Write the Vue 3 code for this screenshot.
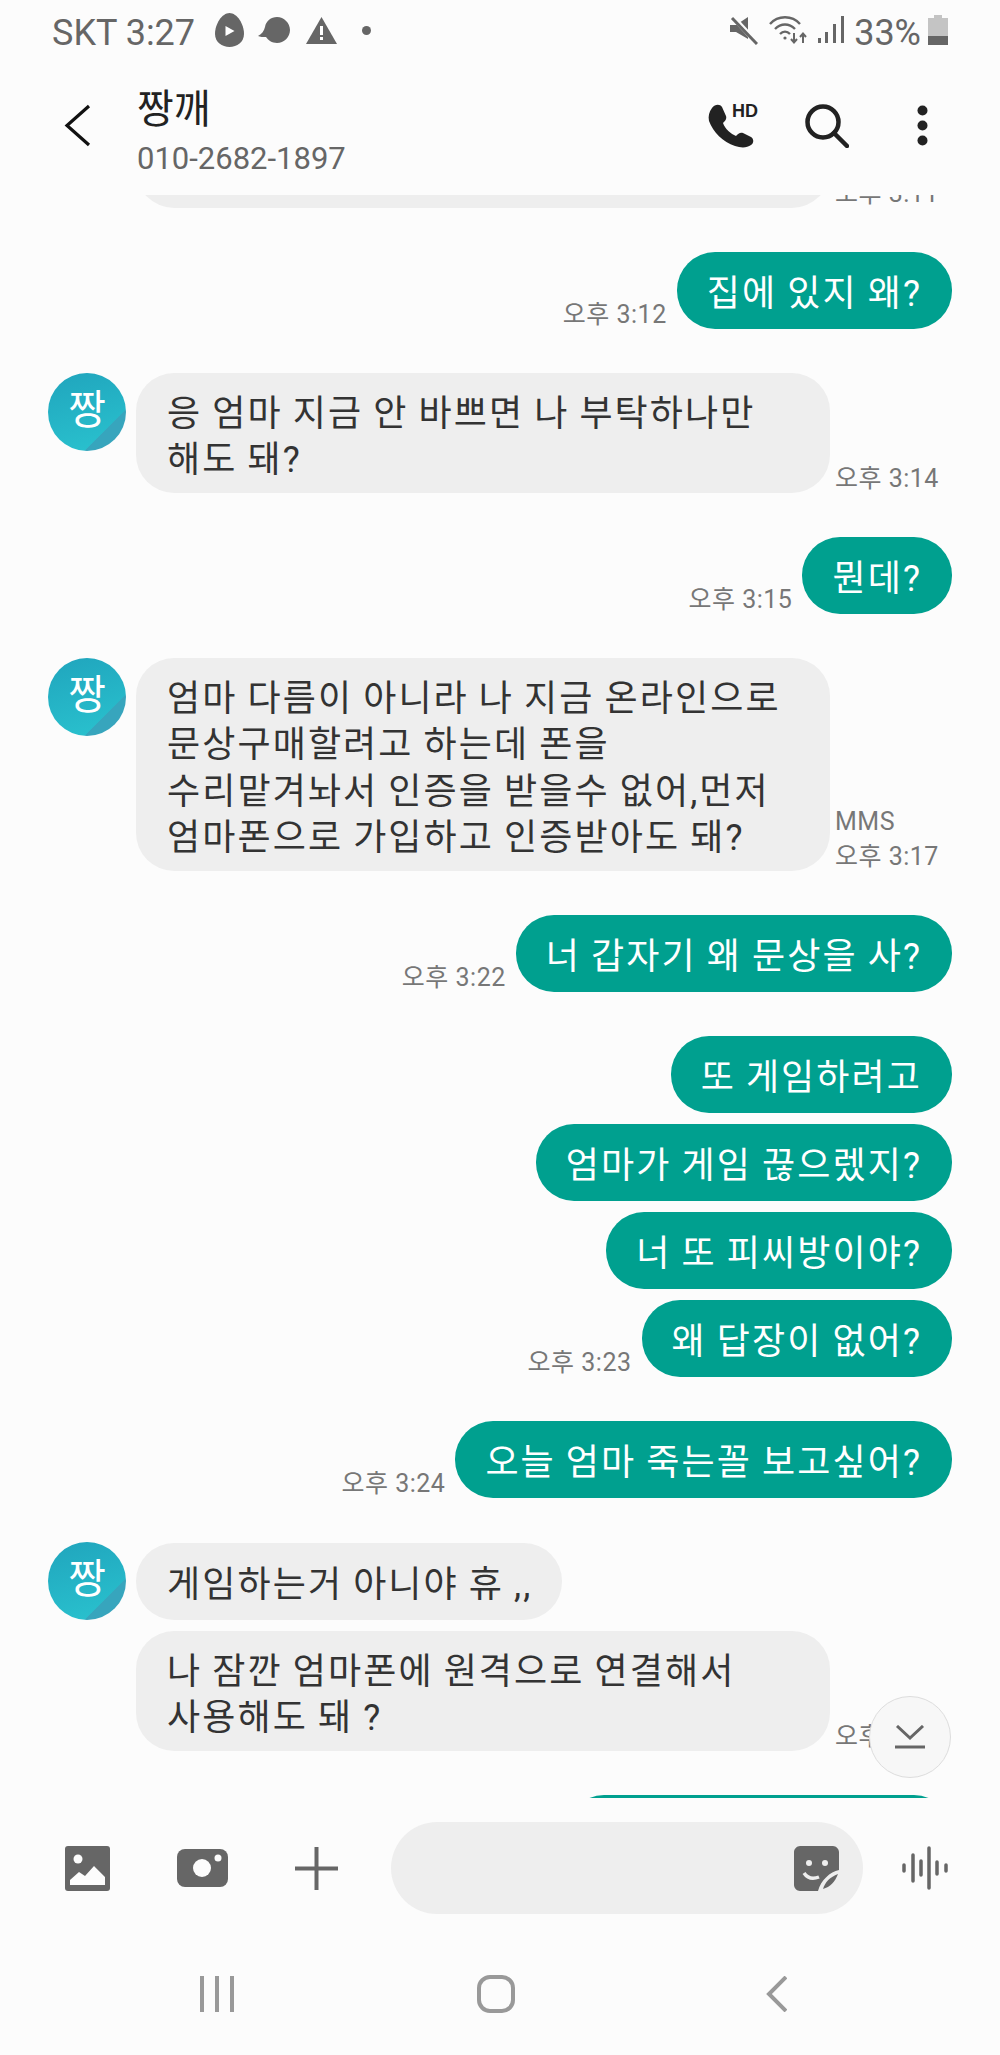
<script setup>
const messages = [
  { id: 1, side: 'in', cut: true, time: '오후 3:11' },
  { id: 2, side: 'out', text: '집에 있지 왜?', time: '오후 3:12' },
  { id: 3, side: 'in', avatar: true, wide: true, text: '응 엄마 지금 안 바쁘면 나 부탁하나만\n해도 돼?', time: '오후 3:14' },
  { id: 4, side: 'out', text: '뭔데?', time: '오후 3:15' },
  { id: 5, side: 'in', avatar: true, wide: true, text: '엄마 다름이 아니라 나 지금 온라인으로\n문상구매할려고 하는데 폰을\n수리맡겨놔서 인증을 받을수 없어,먼저\n엄마폰으로 가입하고 인증받아도 돼?', mms: true, time: '오후 3:17' },
  { id: 6, side: 'out', text: '너 갑자기 왜 문상을 사?', time: '오후 3:22' },
  { id: 7, side: 'out', text: '또 게임하려고' },
  { id: 8, side: 'out', grouped: true, text: '엄마가 게임 끊으렜지?' },
  { id: 9, side: 'out', grouped: true, text: '너 또 피씨방이야?' },
  { id: 10, side: 'out', grouped: true, text: '왜 답장이 없어?', time: '오후 3:23' },
  { id: 11, side: 'out', text: '오늘 엄마 죽는꼴 보고싶어?', time: '오후 3:24' },
  { id: 12, side: 'in', avatar: true, text: '게임하는거 아니야 휴 ,,' },
  { id: 13, side: 'in', grouped: true, wide: true, text: '나 잠깐 엄마폰에 원격으로 연결해서\n사용해도 돼 ?', time: '오후' },
  { id: 14, side: 'out', empty: true }
]
</script>

<template>
  <div class="phone">
    <div class="status">
      <span class="status-text">SKT 3:27</span>
      <svg class="s-egg" width="29" height="34" viewBox="0 0 29 34">
        <path d="M14.5 0C22 0 29 11 29 21 29 29 22 34 14.5 34 7 34 0 29 0 21 0 11 7 0 14.5 0Z" fill="#666" />
        <path d="M10.5 13l9 5-9 5z" fill="#fff" />
      </svg>
      <svg class="s-bubble" width="32" height="26" viewBox="0 0 32 26">
        <path d="M19 0C26 0 32 6 32 13S26 26 19 26C14 26 10 23 8 20 5 20 2 20 0 19 4 17 6 14 7 10 8 4 13 0 19 0Z" fill="#666" />
      </svg>
      <svg class="s-warn" width="31" height="27" viewBox="0 0 31 27">
        <path d="M15.5 0L31 27H0Z" fill="#666" />
        <path d="M14 9h3v9h-3zM14 20h3v3h-3z" fill="#fff" />
      </svg>
      <i class="s-dot"></i>
      <div class="status-right">
        <svg class="s-mute" width="28" height="30" viewBox="0 0 28 30">
          <path d="M0 10h6L18 2v22L6 17H0Z" fill="#666" />
          <path d="M2 1l25 27" stroke="#fcfcfc" stroke-width="5" />
          <path d="M2 3l25 26" stroke="#666" stroke-width="3" />
        </svg>
        <svg class="s-wifi" width="38" height="30" viewBox="0 0 38 30" fill="none" stroke="#666" stroke-width="2.4">
          <path d="M1 9C9 0 23 0 31 9" />
          <path d="M6 14C12 8 20 8 26 14" />
          <path d="M11 19C14 16 18 16 21 19" />
          <circle cx="16" cy="23" r="1.6" fill="#666" stroke="none" />
          <path d="M25 18v9M22 24l3 3.500 3-3.500M34 28v-9M31 22l3-3.500 3 3.500" stroke-width="2" />
        </svg>
        <svg class="s-signal" width="26" height="28" viewBox="0 0 26 28" fill="#666">
          <rect x="0" y="22" width="3" height="5" />
          <rect x="7" y="16" width="3" height="11" />
          <rect x="15" y="8" width="3" height="19" />
          <rect x="23" y="0" width="3" height="27" />
        </svg>
        <span class="status-text pct">33%</span>
        <svg class="s-batt" width="20" height="30" viewBox="0 0 20 30">
          <path d="M6 0h8v3h6v27H0V3h6Z" fill="#c4c4c4" />
          <rect x="0" y="21" width="20" height="9" fill="#666" />
        </svg>
      </div>
    </div>

    <header class="head">
      <svg class="back" width="27" height="43" viewBox="0 0 27 43" fill="none">
        <path d="M25 2L3 21.500 25 41" stroke="#111" stroke-width="3.200" />
      </svg>
      <div class="who">
        <div class="name">짱깨</div>
        <div class="num">010-2682-1897</div>
      </div>
      <svg class="call" width="52" height="46" viewBox="0 0 52 46">
        <path d="M5 6C8 2 13 2 15 5L19 14C20 17 18 19 16 21 18 27 24 32 29 34 31 32 33 30 36 31L44 35C47 37 47 41 44 43 40 46 34 46 28 44 16 40 6 30 2 19 1 14 2 10 5 6Z" fill="#222" />
        <text x="25" y="15" class="hd">HD</text>
      </svg>
      <svg class="search" width="44" height="44" viewBox="0 0 44 44" fill="none" stroke="#222" stroke-width="4.500">
        <circle cx="18" cy="18" r="15.500" />
        <path d="M29 29L42 42" stroke-linecap="round" />
      </svg>
      <svg class="more" width="11" height="41" viewBox="0 0 11 41" fill="#222">
        <circle cx="5.500" cy="5.500" r="5" />
        <circle cx="5.500" cy="20.500" r="5" />
        <circle cx="5.500" cy="35.500" r="5" />
      </svg>
    </header>

    <main class="chat">
      <div
        v-for="m in messages"
        :key="m.id"
        class="row"
        :class="[m.side, { grouped: m.grouped, cut: m.cut }]"
      >
        <template v-if="m.side === 'in'">
          <div v-if="m.avatar" class="avatar">짱</div>
          <div v-else class="avatar-gap"></div>
          <div class="bubble" :class="{ blank: m.cut, wide: m.wide }">{{ m.text }}</div>
          <div v-if="m.time" class="time">
            <div v-if="m.mms">MMS</div>
            <div>{{ m.time }}</div>
          </div>
        </template>
        <template v-else>
          <div v-if="m.time" class="time">{{ m.time }}</div>
          <div class="bubble" :class="{ stub: m.empty }">{{ m.text }}</div>
        </template>
      </div>
      <button class="jump">
        <svg width="30" height="24" viewBox="0 0 30 24" fill="none" stroke="#666" stroke-width="3">
          <path d="M2 1l13 12L28 1" />
          <path d="M0 22h30" />
        </svg>
      </button>
    </main>

    <footer class="composer">
      <svg class="c-gallery" width="45" height="45" viewBox="0 0 45 45">
        <rect width="45" height="45" rx="3" fill="#666" />
        <circle cx="13" cy="13" r="4.500" fill="#fcfcfc" />
        <path d="M5 39V34L14 26 20 30 29 20 40 31V39Z" fill="#fcfcfc" />
      </svg>
      <svg class="c-camera" width="51" height="38" viewBox="0 0 51 38">
        <rect width="51" height="38" rx="8" fill="#666" />
        <circle cx="25" cy="19" r="9" fill="#fcfcfc" />
        <circle cx="41" cy="9" r="3.500" fill="#fcfcfc" />
      </svg>
      <svg class="c-plus" width="43" height="43" viewBox="0 0 43 43" stroke="#666" stroke-width="4">
        <path d="M21.500 0v43M0 21.500h43" />
      </svg>
      <div class="input">
        <svg width="45" height="45" viewBox="0 0 45 45">
          <path d="M6 0H39C42 0 45 3 45 6V24C36 26 27 34 24 45H6C3 45 0 42 0 39V6C0 3 3 0 6 0Z" fill="#666" />
          <circle cx="15" cy="17" r="3" fill="#eee" />
          <circle cx="31" cy="17" r="3" fill="#eee" />
          <path d="M10 27C14 33 20 33 25 31" fill="none" stroke="#eee" stroke-width="3.500" />
          <path d="M29 43C31 36 36 31 44 28 41 36 36 41 29 43Z" fill="#666" />
        </svg>
      </div>
      <svg class="c-voice" width="46" height="44" viewBox="0 0 46 44" stroke="#666" stroke-width="3.500" stroke-linecap="round">
        <path d="M2 19v6M11 9v26M19 15v14M27 2v40M35 16v12M44 19v6" />
      </svg>
    </footer>

    <nav class="nav">
      <svg class="n-recent" width="34" height="36" viewBox="0 0 34 36" stroke="#999" stroke-width="4">
        <path d="M2 0v36M17 0v36M32 0v36" />
      </svg>
      <svg class="n-home" width="38" height="38" viewBox="0 0 38 38" fill="none">
        <rect x="2" y="2" width="34" height="34" rx="11" stroke="#999" stroke-width="4" />
      </svg>
      <svg class="n-back" width="21" height="36" viewBox="0 0 21 36" fill="none">
        <path d="M20 1L3 18l17 17" stroke="#999" stroke-width="4" />
      </svg>
    </nav>
  </div>
</template>

<style scoped>
.phone {
  width: 1000px;
  height: 2055px;
  display: flex;
  flex-direction: column;
  background: #fcfcfc;
  font-family: Roboto, "Noto Sans CJK KR", sans-serif;
  overflow: hidden;
}

.status {
  height: 60px;
  flex: none;
  display: flex;
  align-items: center;
  padding: 0 52px;
}
.status-text {
  font-size: 36px;
  color: #666;
  white-space: nowrap;
  padding-top: 5px;
}
.s-egg { margin-left: 20px; }
.s-bubble { margin-left: 14px; }
.s-warn { margin-left: 16px; }
.s-dot {
  width: 9px;
  height: 9px;
  border-radius: 50%;
  background: #666;
  margin-left: 25px;
}
.status-right {
  margin-left: auto;
  display: flex;
  align-items: center;
}
.s-wifi { margin-left: 11px; }
.s-signal { margin-left: 11px; }
.pct { margin-left: 10px; }
.s-batt { margin-left: 7px; }

.head {
  height: 135px;
  flex: none;
  display: flex;
  align-items: center;
}
.back { margin: 0 0 5px 64px; }
.who {
  margin-left: 46px;
  flex: 1;
  padding-top: 12px;
}
.name {
  font-size: 40px;
  line-height: 50px;
  color: #222;
}
.num {
  font-size: 31px;
  line-height: 48px;
  color: #666;
}
.call { margin-bottom: 5px; }
.hd {
  font-family: "Liberation Sans", sans-serif;
  font-weight: 700;
  font-size: 18px;
  fill: #222;
}
.search { margin: 0 0 4px 46px; }
.more { margin: 0 72px 4px 68px; }

.chat {
  position: relative;
  height: 1603px;
  flex: none;
  overflow: hidden;
  padding: 0 48px;
}
.row {
  display: flex;
  align-items: flex-end;
  margin-top: 44px;
}
.row.cut { margin-top: -107px; }
.row.grouped { margin-top: 11px; }
.row.out { justify-content: flex-end; }

.avatar,
.avatar-gap {
  width: 78px;
  height: 78px;
  flex: none;
  margin-right: 10px;
  align-self: flex-start;
}
.avatar {
  border-radius: 50%;
  background:
    linear-gradient(135deg, transparent 73%, #37a5bd 73.500%),
    linear-gradient(165deg, #20a5bd, #2ac3cf);
  color: #fff;
  font-size: 41px;
  line-height: 74px;
  text-align: center;
}

.bubble {
  min-height: 77px;
  box-sizing: border-box;
  display: flex;
  align-items: center;
  padding: 17.500px 30px 9.500px;
  border-radius: 38px;
  font-size: 36px;
  letter-spacing: 2.100px;
  word-spacing: -1px;
  line-height: 46.500px;
  white-space: pre-line;
}
.in .bubble {
  background: #eee;
  color: #333;
  padding-left: 31px;
}
.out .bubble {
  background: #00a08f;
  color: #fff;
}
.in .bubble.wide { width: 694px; }
.bubble.blank {
  width: 694px;
  height: 120px;
}
.bubble.stub { width: 386px; }

.time {
  font-size: 25px;
  letter-spacing: 0.5px;
  line-height: 35px;
  color: #777;
  margin-bottom: -3px;
  white-space: nowrap;
}
.in .time { margin-left: 5px; }
.out .time { margin-right: 10px; }

.jump {
  position: absolute;
  left: 869px;
  top: 1501px;
  width: 82px;
  height: 82px;
  padding: 0;
  border: 1px solid #ddd;
  border-radius: 50%;
  background: #f7f7f7;
  display: flex;
  align-items: center;
  justify-content: center;
}

.composer {
  height: 140px;
  flex: none;
  display: flex;
  align-items: center;
  padding-left: 65px;
}
.c-camera { margin-left: 67px; }
.c-plus { margin-left: 67px; }
.input {
  width: 472px;
  height: 92px;
  margin-left: 53px;
  border-radius: 46px;
  background: #eee;
  display: flex;
  align-items: center;
  justify-content: flex-end;
  padding-right: 24px;
  box-sizing: border-box;
}
.c-voice { margin-left: 39px; }

.nav {
  height: 112px;
  flex: none;
  display: flex;
  align-items: center;
  padding-left: 200px;
}
.n-home { margin-left: 243px; }
.n-back { margin-left: 251px; }
</style>

<style>
html, body { background: #fcfcfc; }
</style>
